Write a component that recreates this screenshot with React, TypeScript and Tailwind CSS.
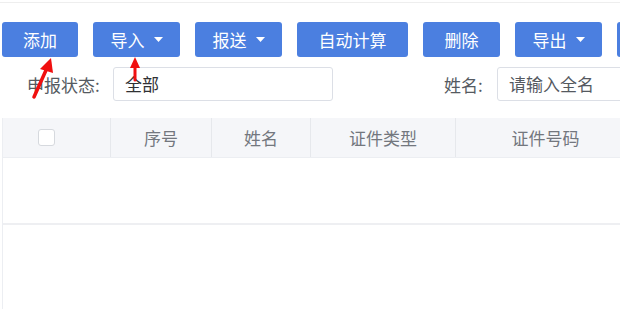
import React from 'react';

const buttons = [
  { text: '添加', w: 'w-[76px]', caret: false },
  { text: '导入', w: 'w-[87px]', caret: true },
  { text: '报送', w: 'w-[87px]', caret: true },
  { text: '自动计算', w: 'w-[111px]', caret: false },
  { text: '删除', w: 'w-[77px]', caret: false },
  { text: '导出', w: 'w-[87px]', caret: true },
  { text: '', w: 'w-[87px]', caret: false },
];

const columns = [
  { text: '序号', w: 'w-[101px]' },
  { text: '姓名', w: 'w-[99px]' },
  { text: '证件类型', w: 'w-[145px]' },
  { text: '证件号码', w: 'w-[180px]' },
];

const Caret = () => (
  <svg width="9" height="5" viewBox="0 0 9 5" className="ml-[9px]">
    <path d="M0 0 L9 0 L4.5 5 Z" fill="#ffffff" />
  </svg>
);

const App: React.FC = () => {
  return (
    <div
      className="relative w-[620px] h-[309px] overflow-hidden bg-white text-[17px]"
      style={{ fontFamily: '"Noto Sans CJK SC", "Noto Sans", sans-serif' }}
    >
      <div className="h-[3px] border-b border-[#eeeeee]" />

      {/* 按钮栏 */}
      <div className="flex gap-[15px] ml-[2px] mt-[19px] w-[800px]">
        {buttons.map((b, i) => (
          <div
            key={i}
            className={`${b.w} h-[35px] shrink-0 flex items-center justify-center rounded-[3px] bg-[#4b7fe0] text-white`}
          >
            <span className="leading-none">{b.text}</span>
            {b.caret && <Caret />}
          </div>
        ))}
      </div>

      {/* 查询条件 */}
      <div className="flex items-center mt-[10px] h-[34px] w-[800px]">
        <span className="ml-[27px] w-[86px] text-[#555a61] leading-none">申报状态:</span>
        <div className="w-[220px] h-[34px] border border-[#dcdfe6] rounded-[3px] flex items-center pl-[11px] text-[#303133]">
          全部
        </div>
        <span className="ml-[111px] w-[53px] text-[#555a61] leading-none">姓名:</span>
        <div className="w-[200px] h-[34px] border border-[#dcdfe6] rounded-[3px] flex items-center pl-[11px] text-[#55595f]">
          请输入全名
        </div>
      </div>

      {/* 表格 */}
      <div className="mt-[17px] ml-[2px] border-l border-[#eceef2] h-[200px]">
        <div className="flex h-[40px] bg-[#f5f6f9] text-[#73777e] border-b border-[#eceef2] w-[800px]">
          <div className="w-[108px] flex items-center justify-center border-r border-[#e6e8ec]">
            <div className="w-[17px] h-[17px] bg-white border border-[#d6d9de] rounded-[3px] ml-[-20px]" />
          </div>
          {columns.map((c) => (
            <div
              key={c.text}
              className={`${c.w} flex items-center justify-center border-r border-[#e6e8ec] leading-none`}
            >
              {c.text}
            </div>
          ))}
        </div>
        <div className="h-[67px] border-b-2 border-[#eeeff2]" />
      </div>

      {/* 红色箭头标注 */}
      <svg className="absolute left-0 top-0 pointer-events-none" width="620" height="309">
        <path d="M34 97 L47 68" stroke="#f01010" strokeWidth="3.5" strokeLinecap="round" />
        <path d="M51 58 L40 69 L53 73 Z" fill="#f01010" />
        <path d="M135 80 L135 66" stroke="#f01010" strokeWidth="3" strokeLinecap="round" />
        <path d="M135 57 L130 68 L140 68 Z" fill="#f01010" />
      </svg>
    </div>
  );
};

export default App;
